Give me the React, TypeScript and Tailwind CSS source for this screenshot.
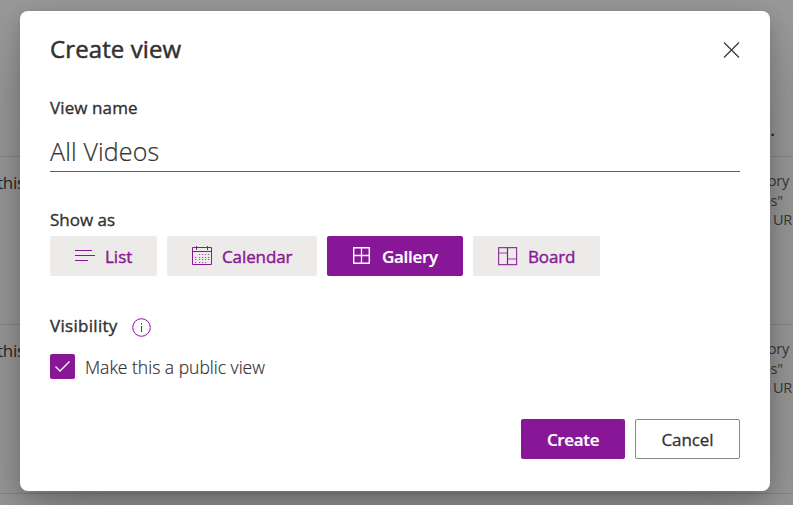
import React from "react";

function ListIcon() {
  return (
    <svg className="block h-5 w-5 shrink-0" viewBox="0 0 20 20" fill="none" stroke="#881798" shapeRendering="crispEdges">
      <path d="M0 4.5h16.5M0 9.5h20M0 14.5h12.5" />
    </svg>
  );
}

function CalendarIcon() {
  const dots: React.ReactNode[] = [];
  [8, 11, 13, 16].forEach((y, row) =>
    [3, 7, 10, 13, 16].forEach((x, col) => {
      if ((row === 0 && col === 0) || (row === 3 && col === 4)) return;
      dots.push(<rect key={`${x}-${y}`} x={x} y={y} width="1.2" height="1" fill="#881798" fillOpacity="0.75" stroke="none" />);
    })
  );
  return (
    <svg className="block h-5 w-5 shrink-0" viewBox="0 0 20 20" fill="none" stroke="#881798">
      <path d="M.5 1.5h19v17H.5zM.5 5.5h19M4.5 0v4M15.5 0v4" />
      {dots}
    </svg>
  );
}

function GalleryIcon() {
  return (
    <svg className="block h-5 w-5 shrink-0" viewBox="0 0 20 20" fill="none" stroke="#fff">
      <path strokeWidth="1.4" d="M1.7 1.7h15.6v15.6H1.7z" />
      <path strokeWidth="1.3" d="M9.5 2v15M2 9.5h15" />
    </svg>
  );
}

function BoardIcon() {
  return (
    <svg className="block h-5 w-5 shrink-0" viewBox="0 0 20 20" fill="none" stroke="#881798">
      <path strokeOpacity="0.85" strokeWidth="1.2" d="M.6 1.6h18v17H.6z" />
      <path d="M9.5 1.5v17" strokeWidth="1.2" />
      <path strokeOpacity="0.8" d="M.5 7h9M9.5 13h9" />
    </svg>
  );
}

function BackgroundRow({ className }: { className: string }) {
  return (
    <div className={`flex shrink-0 items-start justify-between border-t border-[#e1dfdd] pt-[14px] text-[#484644] ${className}`}>
      <span className="-ml-[3px] text-[17px] leading-6 tracking-[-0.3px]">this</span>
      <div className="w-[33px] text-[14.5px] leading-[19.5px] tracking-[-0.2px] whitespace-nowrap text-[#605e5c]">
        <div>gory</div>
        <div className="ml-0.5">os"</div>
        <div className="ml-[13px]">URL</div>
      </div>
    </div>
  );
}

export default function App() {
  return (
    <div className="relative h-[505px] w-[793px] overflow-hidden bg-white font-['Open_Sans','Noto_Sans',sans-serif] text-[#323130]">
      <div className="flex h-full flex-col overflow-hidden">
        <div className="flex h-[156px] shrink-0 items-end justify-end pr-[18px] pb-[14px] text-[17px] leading-6 font-semibold">.</div>
        <BackgroundRow className="h-[168px]" />
        <BackgroundRow className="h-[169px]" />
        <BackgroundRow className="h-[168px]" />
      </div>
      <div className="absolute inset-0 bg-black/40 px-5 pt-[11px]">
        <div
          role="dialog"
          className="flex h-[480px] w-[750px] flex-col rounded-[8px] bg-white px-[30px] shadow-[0_32px_72px_rgba(0,0,0,0.22),0_6px_18px_rgba(0,0,0,0.18)]"
        >
          <header className="flex h-[77px] items-start justify-between">
            <h1 className="pt-[22px] text-[24px] leading-8 tracking-[0.1px] [-webkit-text-stroke:0.5px]">Create view</h1>
            <svg className="mt-[30px] h-[17px] w-[17px]" viewBox="0 0 17 17" fill="none" stroke="#323130" strokeWidth="1.1">
              <path d="m1 1.5 15 15M16 1.5 1 16.5" />
            </svg>
          </header>
          <label className="h-[40px] pt-[8px] text-[17px] leading-6 tracking-[0.1px] [-webkit-text-stroke:0.35px]">View name</label>
          <div className="flex h-[44px] items-center border-b border-[#605e5c] pt-[5px] text-[25px] font-light tracking-[0.15px] [-webkit-text-stroke:0.2px]">
            All Videos
          </div>
          <div className="mt-[36px] h-[28px] text-[17px] leading-6 tracking-[0px] [-webkit-text-stroke:0.35px]">Show as</div>
          <div className="flex h-10 gap-[10px] text-[17px] text-[#881798] [-webkit-text-stroke:0.4px]">
            <div className="flex w-[107px] items-center gap-[10px] rounded-[2px] bg-[#edebe9] pl-[25px]">
              <ListIcon />
              <span className="pt-[2px] tracking-[0px]">List</span>
            </div>
            <div className="flex w-[150px] items-center gap-[10px] rounded-[2px] bg-[#edebe9] pl-[25px]">
              <CalendarIcon />
              <span className="pt-[2px] tracking-[-0.1px]">Calendar</span>
            </div>
            <div className="flex w-[136px] items-center gap-[10px] rounded-[2px] bg-[#881798] pl-[25px] text-white [-webkit-text-stroke:0px]">
              <GalleryIcon />
              <span className="pt-[2px] font-semibold tracking-[-0.3px] [-webkit-text-stroke:0.2px]">Gallery</span>
            </div>
            <div className="flex w-[127px] items-center gap-[10px] rounded-[2px] bg-[#edebe9] pl-[25px]">
              <BoardIcon />
              <span className="pt-[2px] tracking-[-0.15px]">Board</span>
            </div>
          </div>
          <div className="mt-[38px] flex h-[24px] items-start">
            <span className="w-[82px] text-[17px] leading-6 tracking-[0.3px] [-webkit-text-stroke:0.4px]">Visibility</span>
            <svg className="mt-1 h-[19px] w-[19px] shrink-0" viewBox="0 0 19 19" fill="none" stroke="#881798">
              <circle cx="9.5" cy="9.5" r="8.8" />
              <path d="M9.5 8v6M9.5 5v1.5" />
            </svg>
          </div>
          <div className="mt-[16px] flex h-[25px] items-center gap-[10px]">
            <span className="flex h-[25px] w-[25px] shrink-0 items-center justify-center rounded-[2px] bg-[#881798]">
              <svg className="h-[15px] w-[15px]" viewBox="0 0 15 15" fill="none" stroke="#fff" strokeWidth="1.3">
                <path d="M.5 7.5 5 12 14.5 2.5" />
              </svg>
            </span>
            <span className="pt-[2px] text-[17.5px] font-light tracking-[0px] [-webkit-text-stroke:0.2px]">Make this a public view</span>
          </div>
          <footer className="mt-[40px] flex h-10 justify-end gap-[10px] text-[17px]">
            <button className="flex w-[104px] items-center justify-center rounded-[2px] bg-[#881798] pt-px font-semibold tracking-[-0.35px] text-white [-webkit-text-stroke:0.2px]">
              Create
            </button>
            <button className="flex w-[105px] items-center justify-center rounded-[2px] border border-[#8a8886] pt-px tracking-[-0.1px] [-webkit-text-stroke:0.3px]">
              Cancel
            </button>
          </footer>
        </div>
      </div>
    </div>
  );
}
